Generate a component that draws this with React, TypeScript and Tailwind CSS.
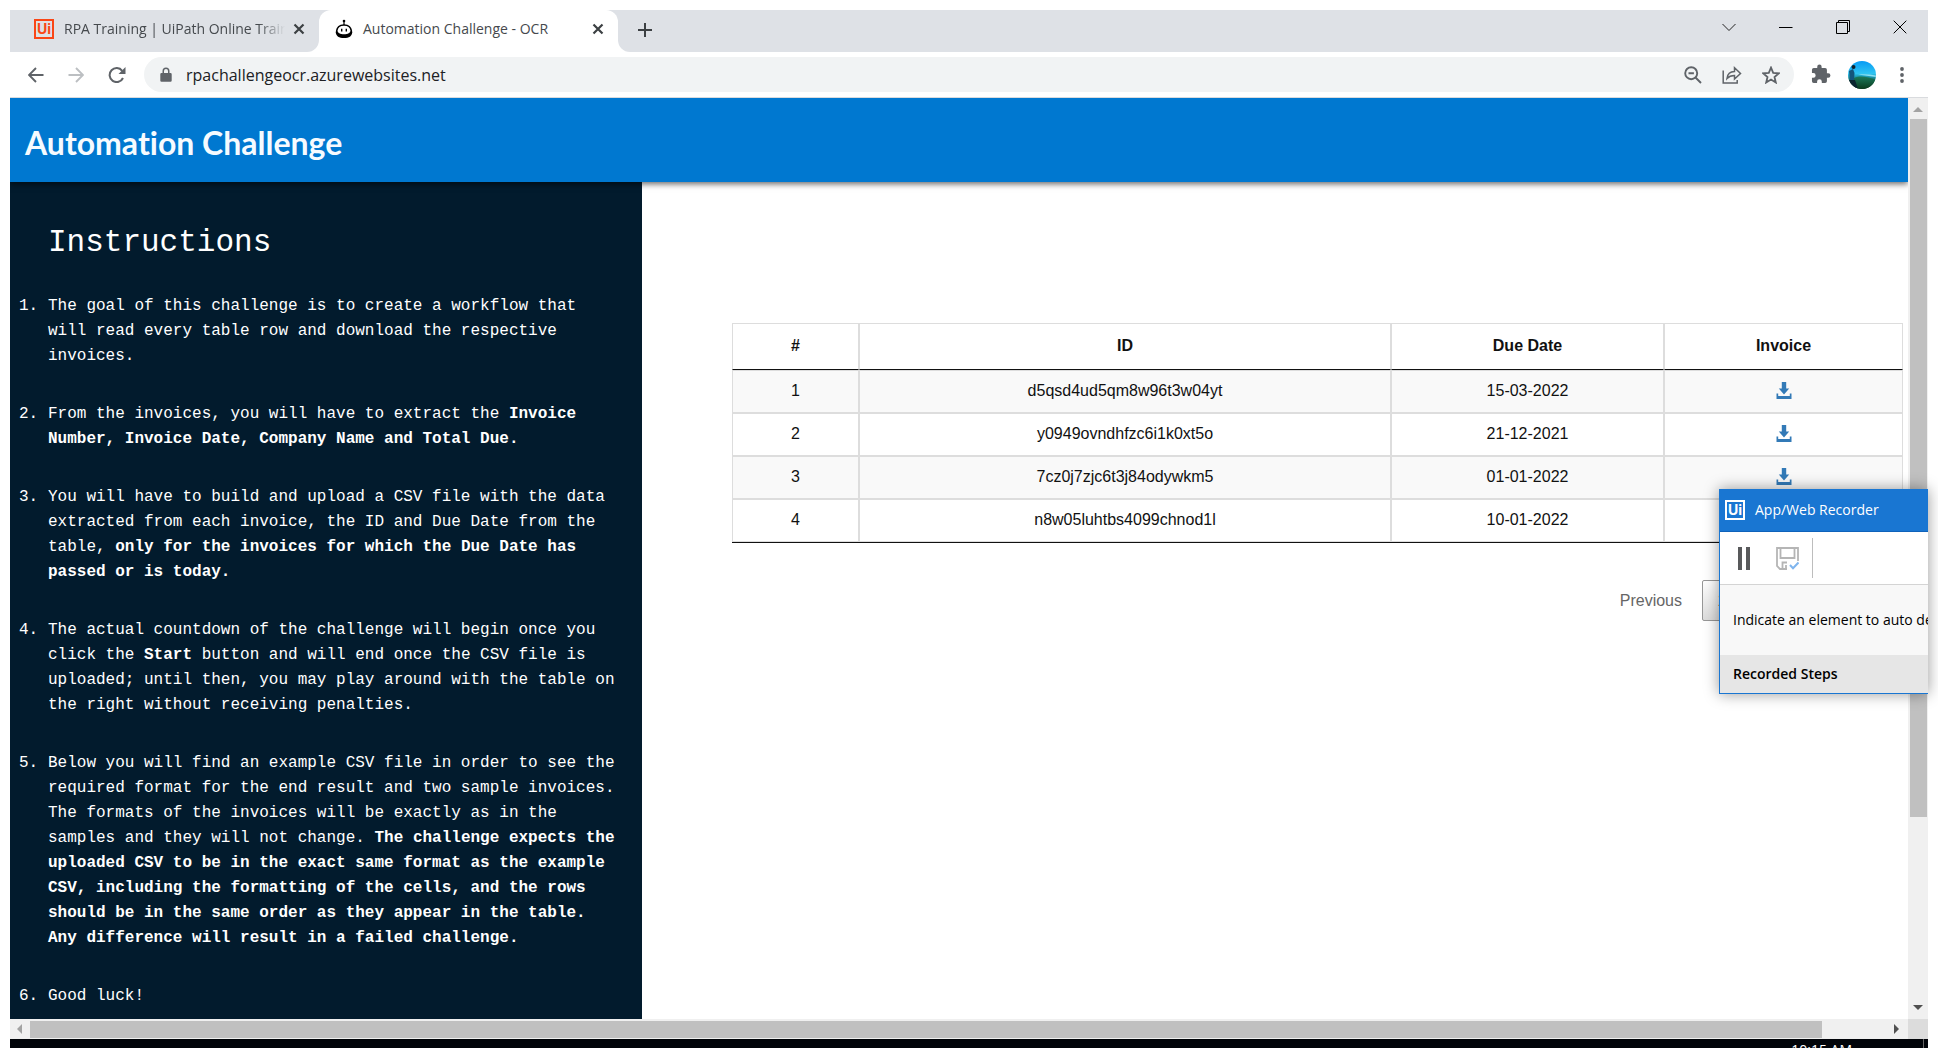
import type { ReactNode } from "react";

const UI_FONT = "font-['Open_Sans','Noto_Sans',sans-serif]";

const rows = [
  { n: 1, id: "d5qsd4ud5qm8w96t3w04yt", due: "15-03-2022" },
  { n: 2, id: "y0949ovndhfzc6i1k0xt5o", due: "21-12-2021" },
  { n: 3, id: "7cz0j7zjc6t3j84odywkm5", due: "01-01-2022" },
  { n: 4, id: "n8w05luhtbs4099chnod1l", due: "10-01-2022" },
];

const steps: ReactNode[] = [
  "The goal of this challenge is to create a workflow that will read every table row and download the respective invoices.",
  <>
    From the invoices, you will have to extract the <b>Invoice Number, Invoice Date, Company Name and Total Due.</b>
  </>,
  <>
    You will have to build and upload a CSV file with the data extracted from each invoice, the ID and Due Date from the
    table, <b>only for the invoices for which the Due Date has passed or is today.</b>
  </>,
  <>
    The actual countdown of the challenge will begin once you click the <b>Start</b> button and will end once the CSV
    file is uploaded; until then, you may play around with the table on the right without receiving penalties.
  </>,
  <>
    Below you will find an example CSV file in order to see the required format for the end result and two sample
    invoices. The formats of the invoices will be exactly as in the samples and they will not change.{" "}
    <b>
      The challenge expects the uploaded CSV to be in the exact same format as the example CSV, including the formatting
      of the cells, and the rows should be in the same order as they appear in the table. Any difference will result in
      a failed challenge.
    </b>
  </>,
  "Good luck!",
];

function UiLogo({ className }: { className: string }) {
  return (
    <span
      aria-hidden="true"
      className={`flex size-5 shrink-0 items-center justify-center border-2 font-['Inter',sans-serif] text-sm leading-none font-bold ${className}`}
    >
      Ui
    </span>
  );
}

function CloseX() {
  return (
    <svg viewBox="0 0 12 12" className="size-3" fill="none" stroke="#3c4043" strokeWidth="2.2">
      <path d="M1.500 1.500l9 9M10.500 1.500l-9 9" />
    </svg>
  );
}

function RobotIcon() {
  return (
    <svg viewBox="0 0 18 20" className="h-5 w-[18px] shrink-0">
      <circle cx="9" cy="2" r="1.300" />
      <path d="M8.400 2h1.200v4H8.400z" />
      <path d="M.8 13.200c.2-5 3.200-7.900 8.200-7.900s8 2.900 8.200 7.900c-.2 4-3.200 5.800-8.200 5.800S1 17.200.8 13.200z" />
      <path d="M2.600 11.500c.3-3.200 2.500-4.800 6.400-4.800s6.100 1.600 6.400 4.800c0 2.500-2.500 3.800-6.400 3.800s-6.400-1.300-6.400-3.800z" fill="#fff" />
      <path d="M6 9.800h1.400v2.600H6zM10.600 9.800H12v2.600h-1.400z" />
    </svg>
  );
}

function TabStrip() {
  return (
    <div className="flex h-[42px] shrink-0 bg-white text-sm text-[#45494d]">
      <div className="flex w-[309px] items-center rounded-br-xl bg-[#dee1e6] pr-2.5 pb-1 pl-6">
        <UiLogo className="border-[#fa4616] text-[#fa4616]" />
        <span className="ml-2.5 flex-1 overflow-hidden [mask-image:linear-gradient(to_right,black_88%,transparent)] whitespace-nowrap">
          RPA Training | UiPath Online Training
        </span>
        <button aria-label="Close tab" className="ml-1 p-1">
          <CloseX />
        </button>
      </div>
      <div className="w-[299px] bg-[#dee1e6]">
        <div className="flex h-full items-center rounded-t-xl bg-white pr-2.5 pb-1 pl-4">
          <RobotIcon />
          <span className="ml-2.5 flex-1 whitespace-nowrap">Automation Challenge - OCR</span>
          <button aria-label="Close tab" className="p-1">
            <CloseX />
          </button>
        </div>
      </div>
      <div className="flex flex-1 justify-between rounded-bl-xl bg-[#dee1e6]">
        <button aria-label="New tab" className="mb-0.5 px-[19px]">
          <svg viewBox="0 0 16 16" className="size-4" fill="none" stroke="#3c4043" strokeWidth="2">
            <path d="M8 1v14M1 8h14" />
          </svg>
        </button>
        <div className="mb-2 flex items-center gap-[43px] pr-[21px]">
          <button aria-label="Search tabs">
            <svg viewBox="0 0 14 14" className="size-3.5" fill="none" stroke="#222">
              <path d="M.5 4l6.500 6.500L13.500 4" />
            </svg>
          </button>
          <button aria-label="Minimize">
            <svg viewBox="0 0 14 14" className="size-3.5" fill="none" stroke="#000">
              <path d="M0 7.500h13.500" />
            </svg>
          </button>
          <button aria-label="Restore">
            <svg viewBox="0 0 14 14" className="size-3.5" fill="none" stroke="#000">
              <path d="M.5 2.500h11v11H.5zM2.500 2V.5h11v11H12" />
            </svg>
          </button>
          <button aria-label="Close window">
            <svg viewBox="0 0 14 14" className="size-3.5" fill="none" stroke="#000">
              <path d="M.7.7l12.600 12.600M13.300.7L.7 13.300" />
            </svg>
          </button>
        </div>
      </div>
    </div>
  );
}

function Toolbar() {
  return (
    <div className="flex h-[46px] shrink-0 items-center border-b border-[#d9dbde] bg-white pr-5 pl-3.5 text-[#5f6368]">
      <button aria-label="Back" className="p-1">
        <svg viewBox="0 0 16 16" className="size-4" fill="none" stroke="currentColor" strokeWidth="1.900">
          <path d="M15.500 8H1.500M8 1L1 8l7 7" />
        </svg>
      </button>
      <button aria-label="Forward" disabled className="ml-4 p-1 text-[#bcbfc2]">
        <svg viewBox="0 0 16 16" className="size-4" fill="none" stroke="currentColor" strokeWidth="1.900">
          <path d="M.5 8h14M8 1l7 7-7 7" />
        </svg>
      </button>
      <button aria-label="Reload" className="ml-4 p-1">
        <svg viewBox="0 0 18 16" className="h-4 w-[18px]" fill="none" stroke="currentColor" strokeWidth="2">
          <path d="M15 11a7 7 0 1 1-.8-7.200" />
          <path d="M17.500 0v7h-7z" fill="currentColor" stroke="none" />
        </svg>
      </button>
      <div className="ml-3.5 flex h-[35px] flex-1 items-center gap-5 rounded-full bg-[#f1f3f4] pr-3.5 pl-4">
        <label className="flex flex-1 items-center gap-3.5">
          <svg viewBox="0 0 12 15" className="h-[15px] w-3" fill="currentColor" role="img" aria-label="Secure address">
            <path d="M1.500 6H2.500V4a3.500 3.500 0 0 1 7 0v2h1A1.200 1.200 0 0 1 11.700 7.200v6.300A1.200 1.200 0 0 1 10.500 14.700h-9A1.200 1.200 0 0 1 .3 13.500V7.200A1.200 1.200 0 0 1 1.500 6zM4 6h4V4a2 2 0 0 0-4 0z" />
          </svg>
          <input
            type="text"
            defaultValue="rpachallengeocr.azurewebsites.net"
            className="min-w-0 flex-1 bg-transparent text-base text-[#202124] outline-none"
          />
        </label>
        <button aria-label="Zoom">
          <svg viewBox="0 0 18 18" className="size-[18px]" fill="none" stroke="currentColor" strokeWidth="1.900">
            <circle cx="7.200" cy="7.200" r="6" />
            <path d="M4.500 7.200h5.400M11.500 11.500l5.500 5.500" />
          </svg>
        </button>
        <button aria-label="Share">
          <svg viewBox="0 0 20 18" className="h-[18px] w-5" fill="none" stroke="currentColor" strokeWidth="1.500">
            <path d="M1.200 4.500v12.500h14v-3" />
            <path d="M5 12.500c.5-4.500 3.500-7 7.500-7V1.800l6 5.700-6 5.500V9.500c-3.500 0-5.500.8-7.500 3z" />
          </svg>
        </button>
        <button aria-label="Bookmark">
          <svg viewBox="0 0 18 18" className="size-[18px]" fill="none" stroke="currentColor" strokeWidth="1.800">
            <path d="M9 1.600l2.200 5.200 5.600.5-4.300 3.700 1.300 5.500L9 13.600l-4.800 2.900 1.300-5.500L1.200 7.300l5.600-.5z" />
          </svg>
        </button>
      </div>
      <button aria-label="Extensions" className="ml-4">
        <svg viewBox="1 1 22 22" className="size-[22px]" fill="currentColor">
          <path d="M20.500 11H19V7a2 2 0 0 0-2-2h-4V3.500a2.500 2.500 0 0 0-5 0V5H4a2 2 0 0 0-2 2v3.800h1.500a2.700 2.700 0 0 1 0 5.400H2V20a2 2 0 0 0 2 2h3.800v-1.500a2.700 2.700 0 0 1 5.400 0V22H17a2 2 0 0 0 2-2v-4h1.500a2.500 2.500 0 0 0 0-5z" transform="translate(1.200 .6) scale(.88)" />
        </svg>
      </button>
      <button aria-label="Profile" className="ml-4">
        <svg viewBox="0 0 28 28" className="size-7">
          <defs>
            <clipPath id="avatar">
              <circle cx="14" cy="14" r="14" />
            </clipPath>
            <linearGradient id="sky" x1="0" y1="0" x2="0" y2="1">
              <stop offset="0" stopColor="#069bf5" />
              <stop offset=".45" stopColor="#2fc4f2" />
              <stop offset=".58" stopColor="#1b93a8" />
              <stop offset=".75" stopColor="#0f5a3c" />
              <stop offset="1" stopColor="#0a2f1e" />
            </linearGradient>
            <linearGradient id="hills" x1="0" y1="0" x2="0" y2="1">
              <stop offset="0" stopColor="#1b7a5c" />
              <stop offset="1" stopColor="#0b3a1c" />
            </linearGradient>
          </defs>
          <g clipPath="url(#avatar)">
            <path d="M0 0h28v28H0z" fill="url(#sky)" />
            <path d="M6 17c7-3 14-1 22 2v9H6z" fill="url(#hills)" />
            <path d="M10 13.500c6-.6 12-.3 18 1v1.500c-6-1-12-1.500-18-2.500z" fill="#8be0f4" />
            <path d="M1 10l4-2 1.500 4-.5 8H2z" fill="#14557c" />
            <path d="M0 19h7l3 9H0z" fill="#0a2530" />
            <circle cx="5.500" cy="6" r="2" fill="#10222c" />
          </g>
        </svg>
      </button>
      <button aria-label="Menu" className="ml-5 px-1">
        <svg viewBox="0 0 4 16" className="h-4 w-1" fill="currentColor">
          <circle cx="2" cy="2" r="1.900" />
          <circle cx="2" cy="8" r="1.900" />
          <circle cx="2" cy="14" r="1.900" />
        </svg>
      </button>
    </div>
  );
}

function Instructions() {
  return (
    <section className="w-[41%] max-w-[632px] shrink-0 bg-[#021b2d] px-[9px] pt-10 font-['Liberation_Mono',monospace] text-base leading-[25px] text-white">
      <h2 className="mb-[30px] pl-[29px] text-[31px] leading-[42px]">Instructions</h2>
      <ol className="flex flex-col gap-[33px] pr-3.5">
        {steps.map((step, i) => (
          <li key={i} className="flex">
            <span className="w-[29px] shrink-0">{i + 1}.</span>
            <p>{step}</p>
          </li>
        ))}
      </ol>
    </section>
  );
}

function DownloadIcon() {
  return (
    <svg viewBox="0 0 16 17" className="h-[17px] w-4" fill="#337ab7">
      <path d="M5.800 0h4.400v6.500h3L8 12.500l-5.200-6h3zM.5 11.500H2.200V14h11.600v-2.500h1.700V17H.5z" />
    </svg>
  );
}

function InvoiceTable() {
  return (
    <table className="w-full table-fixed border-separate border-spacing-0 border-b border-[#111] text-center text-base leading-5 text-[#111]">
      <colgroup>
        <col className="w-[127px]" />
        <col />
        <col className="w-[273px]" />
        <col className="w-[239px]" />
      </colgroup>
      <thead>
        <tr className="h-[47px]">
          {["#", "ID", "Due Date", "Invoice"].map((h) => (
            <th key={h} className="border border-[#ddd] border-b-[#111] pb-0.5 font-bold">
              {h}
            </th>
          ))}
        </tr>
      </thead>
      <tbody>
        {rows.map((r) => (
          <tr key={r.n} className="h-[43px] odd:bg-[#f9f9f9]">
            <td className="border border-[#ddd] pb-0.5">{r.n}</td>
            <td className="border border-[#ddd] pb-0.5">{r.id}</td>
            <td className="border border-[#ddd] pb-0.5">{r.due}</td>
            <td className="border border-[#ddd] pb-1">
              <a href="#" aria-label={`Download invoice ${r.n}`} className="inline-block align-middle">
                <DownloadIcon />
              </a>
            </td>
          </tr>
        ))}
      </tbody>
    </table>
  );
}

function Recorder() {
  return (
    <aside
      className={`absolute top-[391px] right-0 z-20 w-[209px] overflow-hidden border border-r-0 border-[#1976d2] bg-white text-sm whitespace-nowrap text-black shadow-[0_0_14px_rgba(0,0,0,0.4)] ${UI_FONT}`}
    >
      <div className="flex h-[42px] items-center border-b border-[#0f62ba] bg-[#1976d2] pb-0.5 pl-[5px] text-white">
        <UiLogo className="border-white" />
        <span className="ml-2.5">App/Web Recorder</span>
      </div>
      <div className="flex h-[53px] items-center border-b border-[#d4d4d4]">
        <button aria-label="Pause" className="ml-[18px]">
          <svg viewBox="0 0 12 23" className="h-[23px] w-3" fill="#58595b">
            <path d="M0 0h4v23H0zM8 0h4v23H8z" />
          </svg>
        </button>
        <button aria-label="Save" disabled className="ml-[26px]">
          <svg viewBox="0 0 23 23" className="size-[23px]" fill="none" stroke="#b5b5b5" strokeWidth="1.800">
            <path d="M22 14V1H1v18l3 3h7" />
            <path d="M4.500 1.500V11h14V1.500" />
            <path d="M11 15.500H6.500V22M10 18v4" />
            <path d="M14 18l3 3.200 5.500-5.700" stroke="#7fb5ee" strokeWidth="2" />
          </svg>
        </button>
        <span className="ml-[13px] h-10 w-px bg-[#bdbdbd]" />
      </div>
      <p className="flex h-[70px] items-center bg-[#f8f8f8] pl-[13px]">Indicate an element to auto detect</p>
      <h3 className="flex h-[38px] items-center bg-[#e6e6e6] pl-[13px] font-semibold">Recorded Steps</h3>
    </aside>
  );
}

function Arrow({ d, color }: { d: string; color: string }) {
  return (
    <svg viewBox="0 0 10 10" className="size-2.5 shrink-0" fill={color} aria-hidden="true">
      <path d={d} />
    </svg>
  );
}

export default function App() {
  return (
    <div className={`flex h-screen flex-col overflow-hidden bg-white px-[10px] pt-[10px] ${UI_FONT}`}>
      <TabStrip />
      <Toolbar />
      <div className="relative flex min-h-0 flex-1">
        <main className="flex min-w-0 flex-1 flex-col overflow-hidden">
          <header className="z-10 flex h-[84px] shrink-0 items-center bg-[#0078d0] pt-1.5 pl-[15px] shadow-[0_2px_6px_rgba(0,0,0,0.6)]">
            <h1 className="font-['Lato',sans-serif] text-[32px] leading-10 font-bold text-[#f6fbff] [font-variant-ligatures:none]">
              Automation Challenge
            </h1>
          </header>
          <div className="flex min-h-0 flex-1 font-['Liberation_Sans',Arial,sans-serif]">
            <Instructions />
            <section className="min-w-0 flex-1 pt-[141px] pr-[5px] pl-[90px]">
              <InvoiceTable />
              <nav aria-label="Pages" className="mt-[37px] flex justify-end text-base text-[#666]">
                <button className="h-[41px] px-5">Previous</button>
                <button className="h-[41px] w-10 rounded-xs border border-[#979797] bg-linear-to-b from-white to-[#dcdcdc] text-[#333]">
                  1
                </button>
                <button className="h-[41px] w-[161px]">Next</button>
              </nav>
            </section>
          </div>
        </main>
        <div className="flex w-5 shrink-0 flex-col items-center bg-[#f0f0f0] pt-[7px] pb-[7px]">
          <Arrow d="M0 7L5 2l5 5z" color="#a3a3a3" />
          <div className="mt-1 mb-auto h-[77%] w-[17px] bg-[#c0c0c0]" />
          <Arrow d="M0 3l5 5 5-5z" color="#505050" />
        </div>
        <Recorder />
      </div>
      <div className="flex h-5 shrink-0 bg-[#f0f0f0]">
        <div className="flex min-w-0 flex-1 items-center pr-[7px] pl-[5px]">
          <Arrow d="M7 0L2 5l5 5z" color="#a3a3a3" />
          <div className="mr-auto ml-[5px] h-[17px] w-[95%] bg-[#c0c0c0]" />
          <Arrow d="M3 0l5 5-5 5z" color="#505050" />
        </div>
        <div className="w-5 bg-[#dcdcdc]" />
      </div>
      <footer className="flex h-[9px] shrink-0 justify-end gap-[71px] overflow-hidden bg-[#010409] pr-1 text-sm text-white">
        <time className="mt-1 leading-none">10:15 AM</time>
        <span className="w-px bg-[#666]" />
      </footer>
    </div>
  );
}
